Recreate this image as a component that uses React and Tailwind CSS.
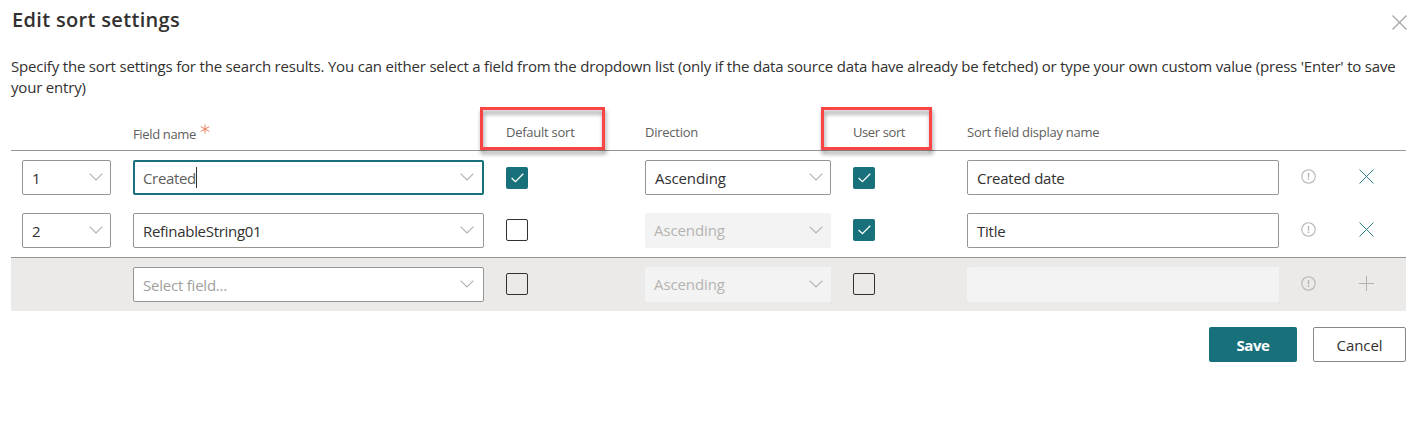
const COLS =
  'grid grid-cols-[111px_373px_139px_208px_114px_334px_58px_47px] pl-[11px]';

function Chevron() {
  return (
    <svg className="mt-[-2px] h-[8px] w-[14px] shrink-0" viewBox="0 0 14 8" fill="none" stroke="#b3b1af" strokeWidth="1.1">
      <path d="M0.6 0.6 7 7 13.4 0.6" />
    </svg>
  );
}

function Select({ value, width, state = 'normal', tracking = 'tracking-[-0.1px]' }) {
  const styles = {
    normal: 'border border-[#979593] bg-white pl-[9px] pr-[7px] text-[#323130]',
    placeholder: 'border border-[#979593] bg-white pl-[9px] pr-[9px] text-[#a19f9d]',
    field: 'border border-[#979593] bg-white pl-[9px] pr-[9px] text-[#323130]',
    focused: 'border-2 border-[#18717a] bg-white pl-2 pr-2 text-[#605e5c]',
    disabled: 'bg-[#f3f3f3] pl-[9px] pr-2 text-[#b5b3b1]',
  };
  return (
    <div className={`flex h-[35px] items-center justify-between rounded-[2px] text-[15px] ${width} ${styles[state]}`}>
      <span className={`flex items-center leading-[20px] ${tracking} ${state === 'disabled' ? 'pb-[2px]' : ''}`}>
        {value}
        {state === 'focused' && <span className="h-[21px] w-px bg-[#323130]" />}
      </span>
      <Chevron />
    </div>
  );
}

function Checkbox({ checked }) {
  return (
    <div
      className={`flex h-[22px] w-[22px] items-center justify-center rounded-[2px] ${
        checked ? 'bg-[#18717a]' : 'border border-[#323130]'
      }`}
    >
      {checked && (
        <svg className="h-[10px] w-[13px]" viewBox="0 0 13 10" fill="none" stroke="#fff" strokeWidth="1.3">
          <path d="M0.6 5 4.4 8.6 12.3 0.7" />
        </svg>
      )}
    </div>
  );
}

function TextField({ value, disabled }) {
  return (
    <div
      className={`flex h-[35px] w-[312px] items-center rounded-[2px] pl-[9px] pt-[2px] text-[15px] tracking-[-0.25px] text-[#323130] ${
        disabled ? 'bg-[#f3f3f3]' : 'border border-[#979593] bg-white'
      }`}
    >
      {value}
    </div>
  );
}

function InfoIcon() {
  return (
    <svg className="h-[15px] w-[15px]" viewBox="0 0 15 15" fill="none" stroke="#b8b6b4" strokeWidth="1.1">
      <circle cx="7.5" cy="7.5" r="6.7" />
      <path d="M7.5 4v4.6M7.5 9.6v1.3" strokeWidth="1.4" />
    </svg>
  );
}

function Cross({ color, width = '0.9', className = '' }) {
  return (
    <svg className={`h-[15px] w-[15px] ${className}`} viewBox="0 0 15 15" fill="none" stroke={color} strokeWidth={width}>
      <path d="M0.5 0.5 14.5 14.5M14.5 0.5 0.5 14.5" />
    </svg>
  );
}

function Plus() {
  return (
    <svg className="h-[15px] w-[15px]" viewBox="0 0 15 15" fill="none" stroke="#b3b1af" strokeWidth="1">
      <path d="M7.5 0v15M0 7.5h15" />
    </svg>
  );
}

function Highlight({ className }) {
  return (
    <div
      className={`absolute -top-[8px] h-[43px] border-[3px] border-[#fb4545] drop-shadow-[1px_4px_2px_rgba(0,0,0,0.4)] ${className}`}
    />
  );
}

export default function App() {
  return (
    <div className="h-[444px] w-[1424px] overflow-hidden bg-white pl-[11px] pr-[18px] font-['Open_Sans','Noto_Sans',sans-serif] text-[#323130]">
      <header className="flex h-[56px] items-start justify-between">
        <h1 className="pl-px pt-[6px] text-[20px] font-semibold leading-[28px] tracking-[0.33px]">Edit sort settings</h1>
        <Cross color="#a3a19f" width="1.1" className="-mr-px mt-[15px]" />
      </header>
      <p className="h-[59px] whitespace-nowrap text-[15px] leading-[21px] tracking-[-0.19px]">
        Specify the sort settings for the search results. You can either select a field from the dropdown list (only if the data source data have already be fetched) or type your own custom value (press 'Enter' to save
        <br />
        your entry)
      </p>

      <div className={`${COLS} relative h-[36px] border-b border-[#979593] text-[13px] leading-[18px] tracking-[-0.25px] text-[#605e5c]`}>
        <span />
        <div className="flex pt-[10px]">
          <span className="tracking-[-0.35px]">Field name</span>
          <svg className="-mt-[1px] ml-1 h-[10px] w-[10px]" viewBox="0 0 10 10" stroke="#ec7f5c" strokeWidth="1">
            <path d="M5 0.5v9M0.8 2.7l8.4 4.6M9.2 2.7 0.8 7.3" />
          </svg>
        </div>
        <div className="pt-[8px]">Default sort</div>
        <div className="pt-[8px]">Direction</div>
        <div className="pt-[8px] tracking-[-0.4px]">User sort</div>
        <div className="pt-[8px]">Sort field display name</div>
        <Highlight className="left-[469px] w-[125px]" />
        <Highlight className="left-[810px] w-[111px]" />
      </div>

      <div className={`${COLS} h-[53px] pt-[9px]`}>
        <Select value="1" width="w-[89px]" />
        <Select value="Created" width="w-[351px]" state="focused" tracking="tracking-[-0.35px]" />
        <div className="pt-[7px]"><Checkbox checked /></div>
        <Select value="Ascending" width="w-[186px]" />
        <div className="pt-[7px]"><Checkbox checked /></div>
        <TextField value="Created date" />
        <div className="pt-[9px]"><InfoIcon /></div>
        <div className="pt-[9px]"><Cross color="#18717a" /></div>
      </div>

      <div className={`${COLS} h-[54px] border-b border-[#979593] pt-[9px]`}>
        <Select value="2" width="w-[89px]" />
        <Select value="RefinableString01" width="w-[351px]" state="field" tracking="tracking-[-0.3px]" />
        <div className="pt-[6px]"><Checkbox /></div>
        <Select value="Ascending" width="w-[186px]" state="disabled" />
        <div className="pt-[6px]"><Checkbox checked /></div>
        <TextField value="Title" />
        <div className="pt-[9px]"><InfoIcon /></div>
        <div className="pt-[9px]"><Cross color="#18717a" /></div>
      </div>

      <div className={`${COLS} h-[53px] bg-[#ebeae9] pt-[9px]`}>
        <span />
        <Select value="Select field..." width="w-[351px]" state="placeholder" tracking="tracking-[-0.22px]" />
        <div className="pt-[6px]"><Checkbox /></div>
        <Select value="Ascending" width="w-[186px]" state="disabled" />
        <div className="pt-[6px]"><Checkbox /></div>
        <TextField value="" disabled />
        <div className="pt-[9px]"><InfoIcon /></div>
        <div className="pt-[9px]"><Plus /></div>
      </div>

      <footer className="flex justify-end gap-4 pt-4 text-[15px]">
        <button className="h-[35px] w-[88px] rounded-[2px] bg-[#18717a] pt-[2px] font-bold tracking-[-0.45px] text-white">Save</button>
        <button className="h-[35px] w-[93px] rounded-[2px] border border-[#8a8886] bg-white pt-[2px] font-medium tracking-[-0.1px]">Cancel</button>
      </footer>
    </div>
  );
}
